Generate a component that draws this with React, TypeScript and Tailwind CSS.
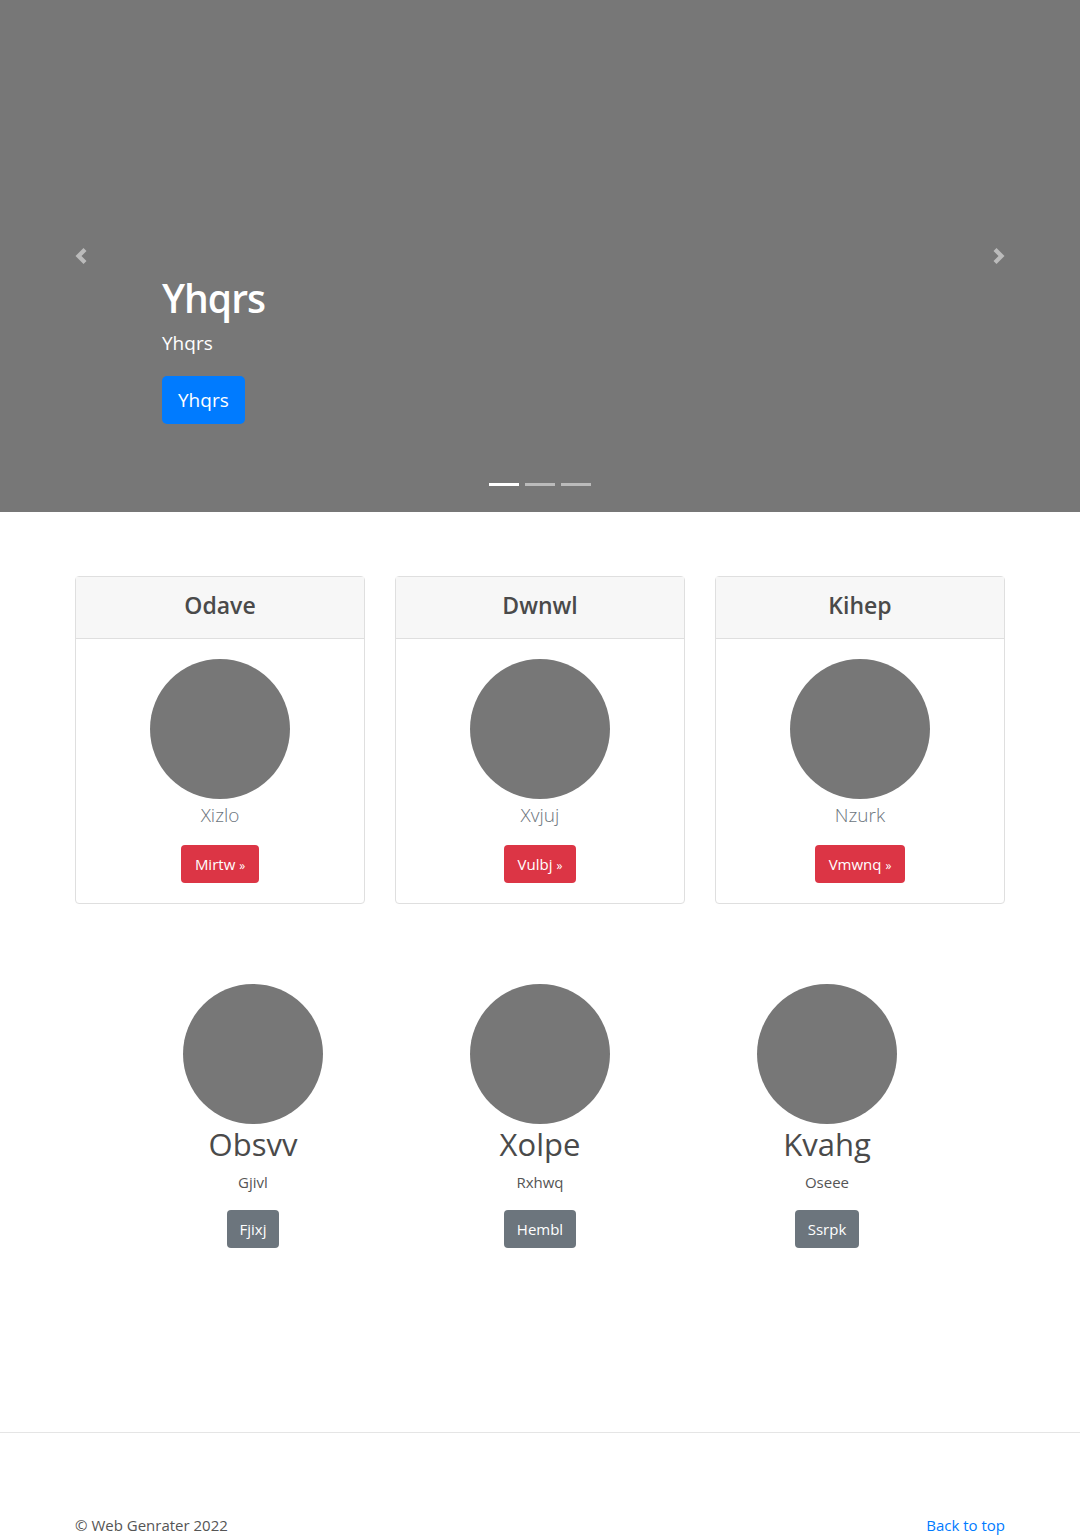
import React from "react";

const cards = [
  { title: "Odave", name: "Xizlo", btn: "Mirtw" },
  { title: "Dwnwl", name: "Xvjuj", btn: "Vulbj" },
  { title: "Kihep", name: "Nzurk", btn: "Vmwnq" },
];

const people = [
  { name: "Obsvv", sub: "Gjivl", btn: "Fjixj" },
  { name: "Xolpe", sub: "Rxhwq", btn: "Hembl" },
  { name: "Kvahg", sub: "Oseee", btn: "Ssrpk" },
];

const Chevron: React.FC<{ dir: "left" | "right" }> = ({ dir }) => (
  <svg width="16" height="20" viewBox="0 0 8 8" className="opacity-50">
    <path
      fill="#fff"
      d={
        dir === "left"
          ? "M5.25 0l-4 4 4 4 1.5-1.5L4.25 4l2.5-2.5L5.25 0z"
          : "M2.75 0l-1.5 1.5L3.75 4l-2.5 2.5L2.75 8l4-4-4-4z"
      }
    />
  </svg>
);

export default function App() {
  return (
    <div
      className="w-[1080px] bg-white text-[#555]"
      style={{ fontFamily: '"Open Sans", "Noto Sans", sans-serif' }}
    >
      {/* carousel */}
      <div className="relative h-[512px] bg-[#777]">
        <button className="absolute left-0 top-0 h-full w-[162px] flex items-center justify-center">
          <Chevron dir="left" />
        </button>
        <button className="absolute right-0 top-0 h-full w-[162px] flex items-center justify-center">
          <Chevron dir="right" />
        </button>
        <div className="mx-auto w-[960px] px-[15px] pt-[272px]">
          <div className="pl-[87px] text-white">
            <h1 className="text-[39px] font-semibold leading-[52px] tracking-[-1px]">
              Yhqrs
            </h1>
            <p className="mt-[4px] text-[19px] leading-[30px]">Yhqrs</p>
            <button className="mt-[18px] h-[48px] rounded-[5px] bg-[#007bff] px-[16px] text-[19px] text-white">
              Yhqrs
            </button>
          </div>
        </div>
        <div className="absolute bottom-[26px] left-0 right-0 flex justify-center gap-[6px]">
          <span className="h-[3px] w-[30px] bg-white" />
          <span className="h-[3px] w-[30px] bg-white/50" />
          <span className="h-[3px] w-[30px] bg-white/50" />
        </div>
      </div>

      {/* cards */}
      <div className="mx-auto w-[930px] pt-[64px]">
        <div className="grid grid-cols-3 gap-[30px]">
          {cards.map((c) => (
            <div
              key={c.title}
              className="rounded-[4px] border border-[#dfdfdf] text-center"
            >
              <div className="flex h-[62px] items-center justify-center border-b border-[#dfdfdf] bg-[#f7f7f7] pb-[4px]">
                <h4 className="text-[23px] font-semibold text-[#4a4a4a]">
                  {c.title}
                </h4>
              </div>
              <div className="flex flex-col items-center px-[20px] pb-[20px] pt-[20px]">
                <div className="h-[140px] w-[140px] rounded-full bg-[#777]" />
                <p className="text-[19px] font-light leading-[32px] text-[#6c757d]">
                  {c.name}
                </p>
                <button className="mt-[14px] h-[38px] rounded-[4px] bg-[#dc3545] px-[14px] text-[15px] text-white">
                  {c.btn} <span className="text-[12px]">»</span>
                </button>
              </div>
            </div>
          ))}
        </div>

        {/* people */}
        <div className="mx-auto mt-[80px] grid w-[861px] grid-cols-3">
          {people.map((p) => (
            <div key={p.name} className="flex flex-col items-center text-center">
              <div className="h-[140px] w-[140px] rounded-full bg-[#777]" />
              <h2 className="text-[31px] leading-[40px] text-[#4a4a4a]">
                {p.name}
              </h2>
              <p className="mt-[6px] text-[15px] leading-[24px]">{p.sub}</p>
              <button className="mt-[16px] h-[38px] rounded-[4px] bg-[#6c757d] px-[13px] text-[15px] text-white">
                {p.btn}
              </button>
            </div>
          ))}
        </div>
      </div>

      {/* footer */}
      <div className="mt-[184px] border-t border-[#e5e5e5]">
        <div className="mx-auto flex w-[930px] items-end justify-between pt-[80px] text-[15px] leading-[24px]">
          <p>© Web Genrater 2022</p>
          <a href="#" className="text-[#007bff]">
            Back to top
          </a>
        </div>
      </div>
    </div>
  );
}
